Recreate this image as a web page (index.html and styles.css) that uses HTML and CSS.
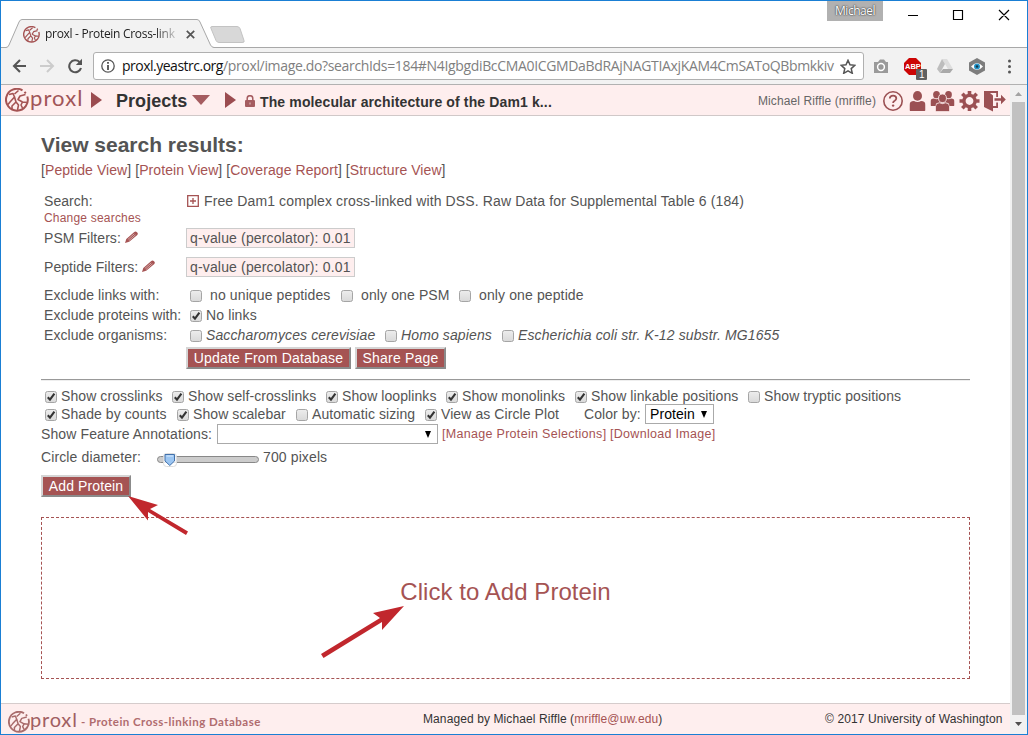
FILE: index.html
```html
<!DOCTYPE html>
<html lang="en">
<head>
<meta charset="utf-8">
<title>proxl - Protein Cross-linking Database</title>
<link rel="stylesheet" href="styles.css">
</head>
<body>
<svg class="defs" aria-hidden="true">
  <defs>
    <linearGradient id="cbfill" x1="0" y1="0" x2="0" y2="1"><stop offset="0" stop-color="#ededed"/><stop offset="1" stop-color="#d9d9d9"/></linearGradient>
    <symbol id="box" viewBox="0 0 12 12"><rect x=".5" y=".5" width="11" height="11" rx="2" fill="url(#cbfill)" stroke="#a5a5a5"/></symbol>
    <symbol id="boxon" viewBox="0 0 12 12"><rect x=".5" y=".5" width="11" height="11" rx="2" fill="url(#cbfill)" stroke="#a5a5a5"/><path d="M2.800 6.200l2.200 2.500 4.400-6" fill="none" stroke="#333" stroke-width="2.100"/></symbol>
    <symbol id="mark" viewBox="0 0 24 24"><g fill="none" stroke="currentColor"><path d="M17.500 2.400A10.900 10.900 0 1 0 22.300 8.500M19.500 3.800l1.300 1.500" stroke-width="2"/><path d="M4 6.500L8 5.500 9.500 9 5 14l-2 2.500M9.500 9l1.500 5-4 4v3M11 14l2.500 3-1 5M9.500 6l4-3.500M20.500 6.500L15 8l-2 3.500 4.500 2.500 4.500.5M17.500 14l-1.500 3 1.500 3" stroke-width="1.600" stroke-linejoin="round"/></g></symbol>
    <symbol id="pencil" viewBox="0 0 13 12"><path d="M0 12l1.300-4L9 1.200Q10.500-.3 12 1.200t.3 2.800L4.200 10.700z" fill="#a55353"/><path d="M2.800 8.500l6.500-5.700M3.800 9.700l6.700-5.900" stroke="#e5c5c5" stroke-width=".7"/></symbol>
    <symbol id="person" viewBox="0 0 16 20"><ellipse cx="8" cy="4.900" rx="4.500" ry="4.900"/><path d="M0 19v-5q0-4 4.500-4Q8 12 11.500 10q4.500 0 4.500 4v5q0 1-1 1H1q-1 0-1-1z"/></symbol>
  </defs>
</svg>
<div class="window">
  <div class="titlebar">
    <svg class="tabshape" width="250" height="30" viewBox="0 0 250 30"><path d="M0 28.500H5Q7 28.500 8 26L18 3Q19 .5 21 .5H196Q198 .5 199 3L209.500 26Q211 28.500 213 28.500H250V30H0z" fill="#f2f2f2"/><path d="M0 28.500H5Q7 28.500 8 26L18 3Q19 .5 21 .5H196Q198 .5 199 3L209.500 26Q211 28.500 213 28.500H250" fill="none" stroke="#a8a8a8"/><path d="M211 7.500h25q2 0 3 2l4 12q1 2-2 2H218q-2 0-3-2l-5-12q-1-2 1-2z" fill="#d8d8d8" stroke="#c3c3c3"/></svg>
    <div class="tab">
      <svg class="favicon" width="17" height="17"><use href="#mark"/></svg>
      <span class="tabtitle">proxl - Protein Cross-link</span>
      <svg width="9" height="9" viewBox="0 0 9 9"><path d="M.8.8l7.400 7.400M8.200.8L.8 8.200" stroke="#555" stroke-width="1.700"/></svg>
    </div>
    <div class="winctl">
      <span class="profile">Michael</span>
      <svg width="104" height="12" viewBox="0 0 104 12"><path d="M0 6.500h10M45.500 1.500h9v9h-9zM91 1l10 10M101 1L91 11" fill="none" stroke="#000" stroke-width="1.150"/></svg>
    </div>
  </div>
  <div class="toolbar">
    <svg class="nav" width="74" height="16" viewBox="0 0 74 16"><path d="M15 8H3M9 2L3 8l6 6" fill="none" stroke="#555" stroke-width="2.100"/><path d="M29 8h12M36 2l6 6-6 6" fill="none" stroke="#ccc" stroke-width="2"/><path d="M68.500 4A6 6 0 1 0 70 10" fill="none" stroke="#555" stroke-width="2.100"/><path d="M71 .8V7h-6.200z" fill="#555"/></svg>
    <div class="address">
      <svg width="14" height="14" viewBox="0 0 14 14"><circle cx="7" cy="7" r="6.200" fill="none" stroke="#555" stroke-width="1.300"/><path d="M7 3v1.700M7 6v5" stroke="#444" stroke-width="1.700"/></svg>
      <span class="url"><b class="host">proxl.yeastrc.org</b><span class="path">/proxl/image.do?searchIds=184#N4IgbgdiBcCMA0ICGMDaBdRAjNAGTIAxjKAM4CmSAToQBbmkkiv</span></span>
      <svg class="star" width="16" height="15" viewBox="0 0 16 15"><path d="M8 1.300l2 4.500 4.900.5-3.700 3.300 1.100 4.700L8 11.900l-4.300 2.400 1.100-4.700L1.100 6.300 6 5.800z" fill="none" stroke="#555" stroke-width="1.500"/></svg>
    </div>
    <svg class="exts" width="146" height="24" viewBox="0 0 146 24">
      <path d="M1 6h4l2-2.500h4L13 6h2v11H1z" fill="#9a9a9a"/><circle cx="8" cy="11" r="3.400" fill="#999" stroke="#fff" stroke-width="1.500"/>
      <path d="M36 2h7l5 5v7l-5 5h-7l-5-5V7z" fill="#cc0505"/><text x="32" y="13" class="abp">ABP</text>
      <rect x="43" y="13" width="11" height="11" rx="1" fill="#606060"/><text x="46" y="22" class="count">1</text>
      <path d="M69 3h5l6 10h-5z" fill="#ddd"/><path d="M69 3l3 5-5 9-3-4z" fill="#bdbdbd"/><path d="M70 13h10l-3 4H67z" fill="#a9a9a9"/>
      <path d="M104 2l8 4.500v8l-8 4.500-8-4.500v-8z" fill="#7d7d7d"/><path d="M98 10.500q6-7 12 0-6 7-12 0z" fill="#fff"/><circle cx="104" cy="10.500" r="3" fill="#2494c8"/><circle cx="104" cy="10.500" r="1.300" fill="#153748"/>
      <g fill="#555"><circle cx="136.500" cy="5" r="1.500"/><circle cx="136.500" cy="10.500" r="1.500"/><circle cx="136.500" cy="16" r="1.500"/></g>
    </svg>
  </div>
  <div class="viewport">
    <div class="page">
      <header class="sitebar">
        <svg class="logo" width="24" height="24"><use href="#mark"/></svg>
        <span class="brand">proxl</span>
        <svg class="tri1" width="11" height="16" viewBox="0 0 11 16"><path d="M0 0l11 8-11 8z" fill="#9b4c50"/></svg>
        <span class="projects">Projects</span>
        <svg class="tri2" width="18" height="10" viewBox="0 0 18 10"><path d="M0 0h18l-9 10z" fill="#a55c60"/></svg>
        <svg class="tri3" width="11" height="16" viewBox="0 0 11 16"><path d="M0 0l11 8-11 8z" fill="#9b4c50"/></svg>
        <svg class="lock" width="10" height="12" viewBox="0 0 10 12"><path d="M2.200 6V3.500a2.800 2.800 0 0 1 5.600 0V6" fill="none" stroke="#a55c60" stroke-width="1.500"/><rect y="5" width="10" height="7" rx="1" fill="#a55c60"/><path d="M5 7.500v2" stroke="#e7c5c5"/></svg>
        <span class="project">The molecular architecture of the Dam1 k...</span>
        <span class="user">Michael Riffle (mriffle)</span>
        <svg class="usericons" width="124" height="22" viewBox="0 0 124 22" fill="#9b5053">
          <circle cx="10" cy="11" r="9.200" fill="none" stroke="#9b5053" stroke-width="1.600"/><path d="M6.800 8.500Q7 5.600 10.100 5.600t3.200 2.700q0 1.500-1.600 2.400-1.600.8-1.600 2.300" fill="none" stroke="#9b5053" stroke-width="1.800"/><circle cx="10.100" cy="15.600" r="1.200"/>
          <use href="#person" x="26.500" y="1" width="16" height="20"/>
          <use href="#person" x="47.500" y="1" width="12" height="15"/><use href="#person" x="59.500" y="1" width="12" height="15"/>
          <g stroke="#feeeee" stroke-width="1"><use href="#person" x="52.500" y="4" width="14" height="17.500"/></g>
          <g transform="translate(86.500 11)"><circle r="5.600" fill="none" stroke="#9b5053" stroke-width="3.400"/><g stroke="#9b5053" stroke-width="3.600"><path d="M0-10v3.500M0 10V6.500M-10 0h3.500M10 0H6.500M-7.200-7.200l2.500 2.500M7.200 7.200L4.700 4.700M-7.200 7.200l2.500-2.500M7.200-7.200L4.700-4.700"/></g></g>
          <path d="M101 1h14v6h-1.800V3H107l3 2.500V16h3.200v-3.500h1.800V18h-5v3.500l-9-4.500z"/><path d="M111.500 8.200h6.500V4.800l4.800 4.700-4.800 4.700v-3.500h-6.500z"/>
        </svg>
      </header>
      <main>
        <h1>View search results:</h1>
        <div class="views">[<a>Peptide View</a>] [<a>Protein View</a>] [<a>Coverage Report</a>] [<a>Structure View</a>]</div>
        <div class="row search"><span class="label">Search:</span><svg class="plus" width="12" height="12" viewBox="0 0 12 12"><path d="M.7.7h10.600v10.600H.7zM3 6h6M6 3v6" fill="none" stroke="#a55353" stroke-width="1.300"/></svg><span class="searchname">Free Dam1 complex cross-linked with DSS. Raw Data for Supplemental Table 6 (184)</span></div>
        <div class="change"><a>Change searches</a></div>
        <div class="row psm"><span class="label">PSM Filters: <svg class="pen" width="13" height="12"><use href="#pencil"/></svg></span><span class="chip">q-value (percolator): 0.01</span></div>
        <div class="row pep"><span class="label">Peptide Filters: <svg class="pen" width="13" height="12"><use href="#pencil"/></svg></span><span class="chip">q-value (percolator): 0.01</span></div>
        <div class="row first"><span class="label wide">Exclude links with:</span><label class="roomy w151"><svg class="cb"><use href="#box"/></svg><span>no unique peptides</span></label><label class="roomy w118"><svg class="cb"><use href="#box"/></svg><span>only one PSM</span></label><label class="roomy"><svg class="cb"><use href="#box"/></svg><span>only one peptide</span></label></div>
        <div class="row"><span class="label wide">Exclude proteins with:</span><label><svg class="cb"><use href="#boxon"/></svg><span>No links</span></label></div>
        <div class="row"><span class="label wide">Exclude organisms:</span><label class="w195"><svg class="cb"><use href="#box"/></svg><i>Saccharomyces cerevisiae</i></label><label class="w117"><svg class="cb"><use href="#box"/></svg><i>Homo sapiens</i></label><label><svg class="cb"><use href="#box"/></svg><i>Escherichia coli str. K-12 substr. MG1655</i></label></div>
        <div class="actions"><button class="update">Update From Database</button><button class="share">Share Page</button></div>
        <div class="rule"></div>
        <div class="opts"><label class="w127"><svg class="cb"><use href="#boxon"/></svg><span>Show crosslinks</span></label><label class="w154"><svg class="cb"><use href="#boxon"/></svg><span>Show self-crosslinks</span></label><label class="w120"><svg class="cb"><use href="#boxon"/></svg><span>Show looplinks</span></label><label class="w129"><svg class="cb"><use href="#boxon"/></svg><span>Show monolinks</span></label><label class="w173"><svg class="cb"><use href="#boxon"/></svg><span>Show linkable positions</span></label><label><svg class="cb"><use href="#box"/></svg><span>Show tryptic positions</span></label></div>
        <div class="opts"><label class="w132"><svg class="cb"><use href="#boxon"/></svg><span>Shade by counts</span></label><label class="w119"><svg class="cb"><use href="#boxon"/></svg><span>Show scalebar</span></label><label class="w129"><svg class="cb"><use href="#box"/></svg><span>Automatic sizing</span></label><label class="w159"><svg class="cb"><use href="#boxon"/></svg><span>View as Circle Plot</span></label><span class="colorby">Color by:</span><span class="select protein"><span>Protein</span><svg width="6" height="7" viewBox="0 0 6 7"><path d="M0 0h6L3 7z"/></svg></span></div>
        <div class="annot"><span class="annotlabel">Show Feature Annotations:</span><span class="select features"><svg width="6" height="7" viewBox="0 0 6 7"><path d="M0 0h6L3 7z"/></svg></span><a class="manage">[Manage Protein Selections]</a><a class="download">[Download Image]</a></div>
        <div class="diameter"><span class="dialabel">Circle diameter:</span>
          <svg width="102" height="18" viewBox="0 0 102 18"><rect x=".5" y="6.500" width="101" height="6" rx="3" fill="#ccc" stroke="#888"/><rect x="6.500" y="3.500" width="13" height="13" rx="3" fill="#fff" fill-opacity=".8" stroke="#ddd"/><path d="M8 4.500h9.500v6.500L12.800 15.500 8 11z" fill="#9cc6f2" stroke="#4271ab"/><path d="M9.500 6h6.500" stroke="#d9ebff"/></svg>
          <span>700 pixels</span></div>
        <button class="add">Add Protein</button>
        <section class="dropzone"><a>Click to Add Protein</a></section>
      </main>
      <footer><svg class="footlogo" width="22" height="22"><use href="#mark"/></svg><span class="footbrand">proxl</span><span class="tagline">- Protein Cross-linking Database</span><span class="managed">Managed by Michael Riffle (<a>mriffle@uw.edu</a>)</span><span class="copyright">© 2017 University of Washington</span></footer>
    </div>
    <div class="scrollbar"><svg width="7" height="4" viewBox="0 0 7 4"><path d="M0 4l3.500-4L7 4z" fill="#a3a3a3"/></svg><div class="thumb"></div><svg width="7" height="4" viewBox="0 0 7 4"><path d="M0 0h7L3.500 4z" fill="#505050"/></svg></div>
  </div>
  <svg class="arrow a1" width="60" height="42" viewBox="0 0 60 42"><path d="M0 0l30 9-8 4 38 22.500-2 3.500L20 16v8.500z" fill="#c1272d"/></svg>
  <svg class="arrow a2" width="84" height="54" viewBox="0 0 84 54"><path d="M83 1L52 8l7 5L0 49l2.500 4L61 17v8z" fill="#c1272d"/></svg>
</div>
</body>
</html>
```
FILE: styles.css
```css
* { box-sizing: border-box; }
body { margin: 0; font: 14px/18px "Liberation Sans", Arial, sans-serif; color: #545454; overflow: hidden; }
svg { display: block; flex: none; }
span, a, i, label { white-space: nowrap; }
a { color: #a55353; }
.defs { position: absolute; width: 0; height: 0; }
.window { position: relative; width: 1028px; height: 735px; border: 1px solid #1a7fd4; background: #fff; display: flex; flex-direction: column; }

.titlebar { position: relative; height: 47px; flex: none; display: flex; justify-content: space-between; border-bottom: 1px solid #a8a8a8; }
.tabshape { position: absolute; left: 0; top: 18px; }
.tab { position: relative; display: flex; align-items: center; height: 30px; margin-top: 18px; padding-left: 22px; }
.favicon { color: #a55353; }
.tabtitle { width: 132px; margin: 0 9px 0 5px; font: 12px/18px "Open Sans", sans-serif; letter-spacing: -.3px; color: #222; -webkit-mask-image: linear-gradient(90deg, #000 110px, transparent 136px); }
.winctl { display: flex; align-items: flex-start; gap: 25px; padding-right: 15px; }
.winctl svg { margin-top: 8px; }
.profile { width: 56px; height: 20px; background: #b1b1b1; color: #fff; text-align: center; font: 12px/20px "Open Sans", sans-serif; letter-spacing: -.5px; text-shadow: 0 0 2px #333, 0 0 1px #333; }
.toolbar { height: 37px; flex: none; display: flex; align-items: center; background: #f2f2f2; border-bottom: 1px solid #b1b1b1; padding-left: 10px; }
.nav { margin-right: 8px; }
.address { width: 771px; height: 28px; display: flex; align-items: center; padding-left: 7px; background: #fff; border: 1px solid #b0b0b0; border-radius: 3px; }
.url { width: 713px; margin: 0 5px 0 7px; font: 14px/22px "Open Sans", sans-serif; }
.host { font-weight: 400; color: #111; letter-spacing: -.5px; }
.path { color: #808080; letter-spacing: -.34px; }
.exts { margin: 4px 0 0 9px; }
.abp { font: bold 7.500px "Liberation Sans", sans-serif; fill: #fff; }
.count { font: 10px "Liberation Sans", sans-serif; fill: #fff; }

.viewport { flex: 1; display: flex; min-height: 0; }
.page { width: 1009px; display: flex; flex-direction: column; }
.sitebar { height: 31px; flex: none; display: flex; align-items: center; padding-left: 4px; background: #feeeee; border-bottom: 1px solid #d0c8c8; }
.logo { color: #a55353; }
.brand { width: 53px; margin: -4px 8px 0 1px; color: #a15558; font: 22px/24px Lato, sans-serif; letter-spacing: 1.1px; }
.projects { width: 71px; margin: 2px 5px 0 14px; font-weight: bold; font-size: 18px; letter-spacing: .05px; color: #333; }
.tri3 { margin: 0 9px 0 15px; }
.lock { margin: 2px 5px 0 0; }
.project { width: 292px; margin: 4px 206px 0 0; font-weight: bold; font-size: 14px; letter-spacing: .13px; color: #333; }
.user { width: 119px; margin: 2px 6px 0 0; font-size: 12px; letter-spacing: .1px; color: #666; }
.usericons { margin-top: 1px; }

main { flex: 1; padding: 16px 40px 0 40px; letter-spacing: .12px; }
h1 { margin: 0; font: bold 21px/26px "Liberation Sans", Arial, sans-serif; letter-spacing: 0; color: #545454; }
.views { height: 24px; line-height: 24px; margin-bottom: 9px; letter-spacing: .07px; }
.row { height: 20px; display: flex; align-items: center; padding-left: 3px; }
.label { width: 142px; display: flex; align-items: center; white-space: pre; letter-spacing: .05px; }
.label.wide { width: 146px; }
.plus { margin: 0 5px 0 1px; }
.pen { margin: -3px 0 0 0; }
.change { height: 14px; padding-left: 3px; font-size: 12px; line-height: 14px; letter-spacing: .2px; }
.psm { height: 26px; }
.pep { height: 32px; margin-bottom: 2px; }
.chip { width: 169px; height: 20px; padding-left: 3px; line-height: 18px; letter-spacing: .16px; border: 1px solid #ccc; background: #feeeee; }
label { display: flex; align-items: center; gap: 4px; }
label.roomy { gap: 8px; }
.cb { width: 12px; height: 12px; margin-top: 2px; }
.actions { display: flex; gap: 4px; margin: 2px 0 10px 145px; }
button { height: 22px; padding: 0; font: 14px/18px "Liberation Sans", Arial, sans-serif; letter-spacing: .2px; color: #fff; background: #a55353; border: 2px solid; border-color: #d5d5d5 #8b8b8b #8b8b8b #d5d5d5; }
.update { width: 165px; }
.share { width: 91px; }
.add { display: block; width: 90px; letter-spacing: .1px; }
.rule { height: 2px; margin-bottom: 6px; border-top: 1px solid #999; background: #eee; }
.opts { height: 18px; display: flex; align-items: center; padding-left: 4px; letter-spacing: .08px; }
.w117 { width: 117px; } .w118 { width: 118px; } .w119 { width: 119px; } .w120 { width: 120px; } .w127 { width: 127px; }
.w129 { width: 129px; } .w132 { width: 132px; } .w151 { width: 151px; } .w154 { width: 154px; }
.w159 { width: 159px; } .w173 { width: 173px; } .w195 { width: 195px; }
.colorby { width: 61px; }
.select { height: 20px; flex: none; display: flex; align-items: center; justify-content: space-between; background: #fff; border: 1px solid #aaa; color: #000; }
.protein { width: 69px; padding: 0 6px 0 4px; }
.features { width: 221px; padding-right: 6px; justify-content: flex-end; }
.annot { height: 22px; display: flex; align-items: center; }
.annotlabel { width: 176px; }
.annot a { font-size: 12.500px; letter-spacing: .3px; }
.manage { width: 168px; margin-left: 4px; }
.diameter { height: 24px; margin-bottom: 6px; display: flex; align-items: center; }
.dialabel { width: 116px; }
.diameter svg { margin: 4px 4px 0 0; }
.dropzone { height: 162px; margin-top: 20px; padding-top: 60px; border: 1px dashed #a55353; text-align: center; }
.dropzone a { font-size: 24px; line-height: 28px; letter-spacing: .05px; }

footer { height: 31px; flex: none; display: flex; align-items: center; padding-left: 7px; background: #feeeee; border-top: 1px solid #d5cccc; font-size: 12px; letter-spacing: .1px; color: #333; }
.footlogo { color: #a96c6c; margin-top: 6px; }
.footbrand { width: 48px; margin: 0 3px 0 0; font: 20px/24px Lato, sans-serif; letter-spacing: .8px; color: #a15f62; }
.tagline { width: 181px; margin: 5px 161px 0 0; font: bold 11.500px/16px Lato, sans-serif; letter-spacing: .47px; color: #b06c6e; }
.managed { width: 402px; }

.scrollbar { width: 17px; background: #f1f1f1; display: flex; flex-direction: column; align-items: center; padding: 7px 0 8px; }
.thumb { width: 13px; flex: 1; margin: 6px 0 7px; background: #c1c1c1; }
.arrow { position: absolute; }
.a1 { left: 127px; top: 495px; }
.a2 { left: 320px; top: 604px; }
```
